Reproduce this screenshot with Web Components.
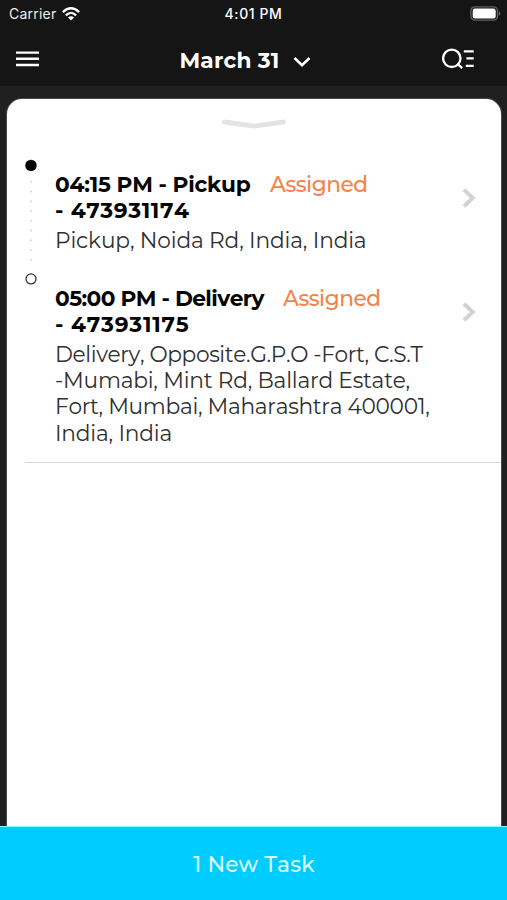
<!DOCTYPE html>
<html lang="en">
<head>
<meta charset="utf-8">
<title>Tasks</title>
<style>
html,body{margin:0;height:100%}
body{background:#202020;font-family:Montserrat,Inter,"Open Sans",sans-serif;font-size:21.7px;font-kerning:none;overflow:hidden}
</style>
</head>
<body>
<task-app></task-app>
<script>
const define = (name, html, ready) => customElements.define(name, class extends HTMLElement {
  connectedCallback() {
    if (this.shadowRoot) return;
    this.attachShadow({mode: 'open'}).innerHTML = html;
    if (ready) ready(this, this.shadowRoot);
  }
});

/* One line of text, tracked so that it fills the width in its "w" attribute. */
define('text-line', `<style>:host{display:inline-block;white-space:nowrap;flex:none}span{display:inline-block;white-space:pre}</style><span></span>`,
(el, root) => {
  const span = root.querySelector('span');
  span.textContent = el.getAttribute('t');
  const w = +el.getAttribute('w');
  const natural = span.getBoundingClientRect().width;
  span.style.letterSpacing = ((w - natural) / span.textContent.length).toFixed(4) + 'px';
  el.style.width = w + 'px';
});

define('status-bar', `<style>
:host{display:grid;grid-template-columns:1fr auto 1fr;align-items:center;height:28px;color:#eee;font:14px/28px Inter,sans-serif;padding:0 6px 0 9px}
.l{display:flex;align-items:center;gap:5px}.r{justify-self:end;display:flex}
.t{font-weight:500;color:#fff;margin-right:3px}svg{display:block}
</style>
<div class="l"><text-line t="Carrier" w="47.5"></text-line>
<svg width="18" height="14" viewBox="0 0 18 14" fill="none" stroke="#fff" stroke-width="2.3"><path d="M.9 5.1Q9-2.5 17.1 5.1"/><path d="M3.9 8.3Q9 3.5 14.1 8.3"/><path d="M9 13.5L6 10.5Q9 8 12 10.5Z" fill="#fff" stroke="none"/></svg></div>
<text-line class="t" t="4:01 PM" w="58"></text-line>
<div class="r"><svg width="31" height="16" viewBox="0 0 31 16"><rect x=".9" y=".9" width="26.6" height="13.2" rx="4" fill="none" stroke="#626262" stroke-width="1.3"/><rect x="2.7" y="2.6" width="23" height="9.9" rx="2.3" fill="#fff"/><path d="M28.9 5Q32 7.5 28.9 10Z" fill="#626262"/></svg></div>`);

define('nav-bar', `<style>
:host{display:grid;grid-template-columns:1fr auto 1fr;align-items:center;height:58px;padding:0 33px 0 16px;box-sizing:border-box;color:#fff;font-weight:700;line-height:30px}
svg{display:block}.m{display:flex;align-items:center;gap:13px;padding:7px 0 1px 0}.m svg{margin-top:3px}.s{justify-self:end}
</style>
<svg width="23" height="18" viewBox="0 0 23 18" stroke="#fff" stroke-width="2.4" style="margin-top:3px"><path d="M0 2.6H23M0 8.8H23M0 15H23"/></svg>
<div class="m"><text-line t="March 31" w="100"></text-line>
<svg width="18" height="12" viewBox="0 0 18 12" fill="none" stroke="#fff" stroke-width="2.6"><path d="M1.5 2L9 9.3L16.5 2"/></svg></div>
<svg class="s" width="32" height="22" viewBox="0 0 32 22" fill="none" stroke="#fff" stroke-width="2.3" style="margin-top:4px"><circle cx="9.8" cy="10.3" r="8.7"/><path d="M15.2 15.7L20.2 20.2M21.8 3.4H31.7M24.4 10.4H31.7M23.8 17.9H31.7" /></svg>`);

define('task-stop', `<style>
:host{display:grid;grid-template-columns:30px 1fr 38px;column-gap:0;line-height:26.2px}
.rail{display:flex;flex-direction:column;align-items:center;width:12px}
.rail svg{display:block;flex:none}
.body{padding-top:11.6px;display:flex;flex-direction:column}
.head{display:flex;font-weight:700;color:#050505}
.num{font-weight:700;color:#050505}
.state{color:#f58248;font-weight:500}
.addr{margin-top:4px;color:#303030;font-weight:400;display:flex;flex-direction:column}
.go{margin-top:29px;margin-left:-1px}
</style>
<div class="rail"></div><div class="body"><div class="head"></div><div class="num"></div><div class="addr"></div></div>
<svg class="go" width="14" height="20" viewBox="0 0 14 20" fill="none" stroke="#d2d2d2" stroke-width="3.9"><path d="M2 1.8L10.8 10L2 18.2"/></svg>`,
(el, root) => {
  const line = (t, w, c = '') => `<text-line class="${c}" t="${t}" w="${w}"></text-line>`;
  const first = el.hasAttribute('first');
  const dots = first ? Array.from({length: 9}, (_, i) => `<circle cx="6" cy="${22.8 + i * 9.75}" r=".95" fill="#d4d4d4"/>`).join('') : '';
  root.querySelector('.rail').innerHTML = `<svg width="12" height="${first ? 108 : 14}">` +
    `<circle cx="6" cy="${first ? 6.4 : 5.9}" r="${first ? 5.7 : 5}" fill="${first ? '#000' : '#fff'}" ${first ? '' : 'stroke="#333" stroke-width="1.3"'}/>${dots}</svg>`;
  root.querySelector('.head').innerHTML = line(el.getAttribute('title-text'), el.getAttribute('hw')) + line('Assigned', 97.5, 'state');
  root.querySelector('.state').style.marginLeft = el.getAttribute('gap') + 'px';
  root.querySelector('.num').innerHTML = line(el.getAttribute('number'), 134.5);
  root.querySelector('.addr').innerHTML = el.getAttribute('address').split('|').map(s => line(...s.split('~'))).join('');
});

define('task-sheet', `<style>
:host{display:block;background:#fff;border-radius:15px 15px 0 0;box-shadow:0 0 0 1px #4a4a4a;box-sizing:border-box;padding-top:19px}
.grip{display:block;margin:0 auto}
.list{margin:27px 0 0 18px;border-bottom:1.5px solid #d5d5d5;padding-bottom:16.4px}
</style>
<svg class="grip" width="66" height="14" viewBox="0 0 66 14" fill="none" stroke="#e3e3e3" stroke-width="4.8" stroke-linecap="round" stroke-linejoin="round"><path d="M3.5 4L33 8.2L62.5 4"/></svg>
<div class="list"><slot></slot></div>`);

define('new-task-button', `<style>
:host{display:flex;justify-content:center;align-items:center;height:73px;background:#00ccff;color:#d9ffff;font-weight:500;flex:none;box-shadow:0 -1px #8ff}
text-line{margin-left:1px}
</style><text-line t="1 New Task" w="121.5"></text-line>`);

define('task-app', `<style>
:host{display:flex;flex-direction:column;height:900px}
header{background:#151515;flex:none;height:86px}
task-sheet{flex:1;margin:13px 6.5px 0 7px}
task-stop[first]{height:114px}
new-task-button{position:relative}
</style>
<header><status-bar></status-bar><nav-bar></nav-bar></header>
<task-sheet>
<task-stop first title-text="04:15 PM - Pickup" hw="195.5" gap="19.5" number="- 473931174" address="Pickup, Noida Rd, India, India~311.5"></task-stop>
<task-stop title-text="05:00 PM - Delivery" hw="209" gap="19" number="- 473931175" address="Delivery, Opposite.G.P.O -Fort, C.S.T~367.5|-Mumabi, Mint Rd, Ballard Estate,~355|Fort, Mumbai, Maharashtra 400001,~374.5|India, India~117"></task-stop>
</task-sheet>
<new-task-button></new-task-button>`);
</script>
</body>
</html>
